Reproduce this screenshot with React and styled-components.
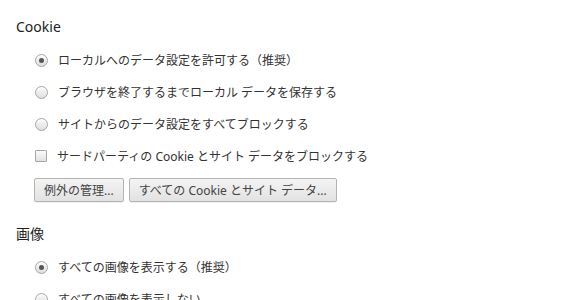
import styled, { createGlobalStyle } from 'styled-components';

const GlobalStyle = createGlobalStyle`
  html, body {
    margin: 0;
    background: #fff;
  }
  body {
    font-family: "Noto Sans", "Noto Sans CJK JP", sans-serif;
    color: #333;
  }
`;

const cookieOptions = [
  { label: 'ローカルへのデータ設定を許可する（推奨）', checked: true },
  { label: 'ブラウザを終了するまでローカル データを保存する' },
  { label: 'サイトからのデータ設定をすべてブロックする' },
];

const imageOptions = [
  { label: 'すべての画像を表示する（推奨）', checked: true },
  { label: 'すべての画像を表示しない' },
];

function Settings() {
  return (
    <PageStyled>
      <Heading>Cookie</Heading>
      <OptionList>
        {cookieOptions.map((opt) => (
          <Row key={opt.label}>
            <Radio $checked={opt.checked} />
            <Label>{opt.label}</Label>
          </Row>
        ))}
        <Row>
          <Checkbox />
          <Label>サードパーティの Cookie とサイト データをブロックする</Label>
        </Row>
        <ButtonBar>
          <Button>例外の管理...</Button>
          <Button>すべての Cookie とサイト データ...</Button>
        </ButtonBar>
      </OptionList>

      <Heading $spaced>画像</Heading>
      <OptionList>
        {imageOptions.map((opt) => (
          <Row key={opt.label}>
            <Radio $checked={opt.checked} />
            <Label>{opt.label}</Label>
          </Row>
        ))}
      </OptionList>
    </PageStyled>
  );
}

const PageStyled = styled.div`
  padding: 17px 16px 0;
  height: 300px;
  box-sizing: border-box;
  overflow: hidden;
`;

const Heading = styled.h3`
  margin: ${(p) => (p.$spaced ? '22px' : '0')} 0 7px;
  font-size: 14px;
  font-weight: 400;
  line-height: 20px;
  color: #222;
`;

const OptionList = styled.div`
  display: flex;
  flex-direction: column;
  margin-left: 19px;
`;

const Row = styled.div`
  display: flex;
  align-items: center;
  height: 32px;
`;

const Radio = styled.span`
  position: relative;
  width: 11px;
  height: 11px;
  border-radius: 50%;
  border: 1px solid #a6a6a6;
  background: linear-gradient(#fbfbfb, #dedede);
  box-shadow: inset 0 1px 1px rgba(255, 255, 255, 0.8);
  flex: none;

  &::after {
    content: '';
    display: ${(p) => (p.$checked ? 'block' : 'none')};
    position: absolute;
    left: 3px;
    top: 3px;
    width: 5px;
    height: 5px;
    border-radius: 50%;
    background: #555;
  }
`;

const Checkbox = styled.span`
  width: 10px;
  height: 10px;
  border: 1px solid #a6a6a6;
  border-radius: 1px;
  background: linear-gradient(#fafafa, #e2e2e2);
  flex: none;
`;

const Label = styled.span`
  margin-left: 10px;
  font-size: 12px;
  white-space: nowrap;
`;

const ButtonBar = styled.div`
  display: flex;
  gap: 5px;
  margin-top: 6px;
  margin-left: -1px;
`;

const Button = styled.button`
  height: 24px;
  padding: 0 9px;
  font-family: inherit;
  font-size: 12px;
  color: #444;
  border: 1px solid #b4b4b4;
  border-radius: 2px;
  background: linear-gradient(#f4f4f4, #e2e2e2);
  box-shadow: 0 1px 0 rgba(0, 0, 0, 0.06);
  white-space: nowrap;
`;

export default function App() {
  return (
    <>
      <GlobalStyle />
      <Settings />
    </>
  );
}
